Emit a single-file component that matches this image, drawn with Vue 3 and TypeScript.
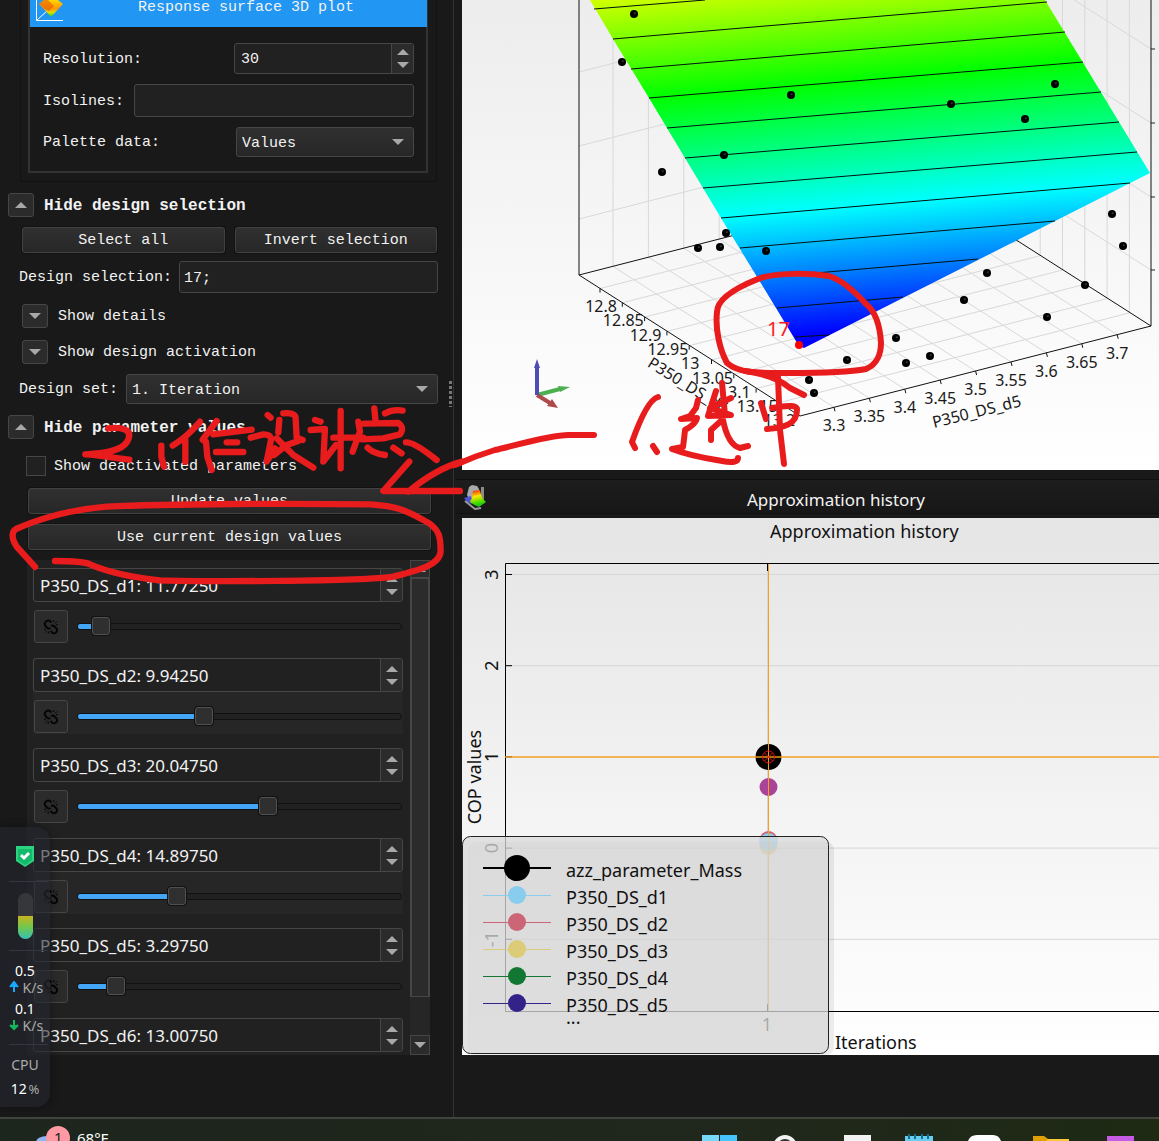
<script setup lang="ts">
import { ref } from 'vue'

interface Param { name: string; value: string; pos: number | null }
interface Label { x: number; y: number; t: string }

const resolution = ref('30')
const isolines = ref('')
const selection = ref('17;')
const showDeactivated = ref(false)

const params = ref<Param[]>([
  { name: 'P350_DS_d1', value: '11.77250', pos: 46 },
  { name: 'P350_DS_d2', value: '9.94250', pos: 382 },
  { name: 'P350_DS_d3', value: '20.04750', pos: 595 },
  { name: 'P350_DS_d4', value: '14.89750', pos: 294 },
  { name: 'P350_DS_d5', value: '3.29750', pos: 94 },
  { name: 'P350_DS_d6', value: '13.00750', pos: null },
])

const range = (n: number) => Array.from({ length: n }, (_, i) => i)

// Box corners of the 3D plot: left, front, right and back on the floor.
const L = [579, 275]
const F = [800, 416]
const R = [1151, 326]
const B = [930, 185]

const d5Ticks = range(9).map(i => ({ x: 834 + i * 35.4, y: 407.3 - i * 9.07 }))
const d6Ticks = range(9).map(i => ({ x: 600 + i * 22.3, y: 288.5 + i * 14.3 }))
const wallLevels = [49, 123, 197, 270]

const d5Labels: Label[] = ['3.3', '3.35', '3.4', '3.45', '3.5', '3.55', '3.6', '3.65', '3.7']
  .map((t, i) => ({ t, x: 834 + i * 35.4, y: 431 - i * 9 }))
const d6Labels: Label[] = ['12.8', '12.85', '12.9', '12.95', '13', '13.05', '13.1', '13.15', '13.2']
  .map((t, i) => ({ t, x: 601 + i * 22.3, y: 312 + i * 14.3 }))

const contours = [
  [594, 9, 705, 0], [613, 39, 1047, 2], [631, 69, 1065, 32], [649, 98, 1083, 62],
  [667, 128, 1101, 92], [685, 158, 1119, 122], [703, 188, 1137, 152], [721, 218, 1130, 183],
  [740, 248, 1055, 221], [758, 278, 978, 259], [777, 308, 903, 297], [795, 337, 829, 335],
]
const designs = [
  [634, 14], [622, 62], [662, 172], [791, 95], [724, 155], [951, 104], [1025, 119], [1055, 84],
  [1112, 214], [726, 233], [698, 248], [720, 247], [766, 251], [1123, 246], [1085, 285], [1047, 317],
  [987, 273], [964, 300], [896, 338], [906, 363], [930, 356], [847, 360], [809, 380], [814, 393],
]

const copTicks = [3, 2, 1, 0, -1].map((v, i) => ({ v, y: 574.5 + i * 91.2 }))
const legend = [
  { t: 'azz_parameter_Mass', c: '#000000', r: 13, y: 868 },
  { t: 'P350_DS_d1', c: '#88ccee', r: 9, y: 895 },
  { t: 'P350_DS_d2', c: '#cc6677', r: 9, y: 922 },
  { t: 'P350_DS_d3', c: '#ddcc77', r: 9, y: 949 },
  { t: 'P350_DS_d4', c: '#117733', r: 9, y: 976 },
  { t: 'P350_DS_d5', c: '#332288', r: 9, y: 1003 },
]
</script>

<template>
  <div class="desktop">
    <main class="window">
      <aside class="settings">
        <div class="frame">
          <section class="group">
            <h2 class="group-title">
              <svg class="plot-icon" width="30" height="22" viewBox="0 0 30 22">
                <defs>
                  <linearGradient id="sheet" x1="0" y1="0" x2="0" y2="1">
                    <stop offset="0" stop-color="#ffd800" /><stop offset=".5" stop-color="#ff9500" />
                    <stop offset=".75" stop-color="#d9e000" /><stop offset="1" stop-color="#00d020" />
                  </linearGradient>
                </defs>
                <path d="M1.500 0V20.500H28M2 20L12 11" fill="none" stroke="#fff" />
                <path d="M4 4L9 0H23L28 4L16 17Q10 10 4 4Z" fill="url(#sheet)" />
                <path d="M4 4Q11 10 14 11L19 6L13 0H9Z" fill="#e85a00" opacity=".6" />
              </svg>
              <span>Response surface 3D plot</span>
            </h2>
            <div class="group-body">
              <div class="row">
                <label for="resolution">Resolution:</label>
                <div class="spin mid">
                  <input id="resolution" v-model="resolution" type="text">
                  <div class="steps"><button aria-label="Increase resolution"><i class="tri up" /></button><button aria-label="Decrease resolution"><i class="tri" /></button></div>
                </div>
              </div>
              <div class="row">
                <label for="isolines">Isolines:</label>
                <input id="isolines" v-model="isolines" class="field" type="text">
              </div>
              <div class="row">
                <label for="palette">Palette data:</label>
                <div class="drop mid"><select id="palette"><option>Values</option></select></div>
              </div>
            </div>
          </section>
        </div>

        <div class="fold">
          <button class="toggle" aria-label="Hide design selection"><i class="tri up" /></button>
          <h3>Hide design selection</h3>
        </div>
        <div class="pair">
          <button class="btn">Select all</button>
          <button class="btn">Invert selection</button>
        </div>
        <div class="line">
          <label for="selection">Design selection:</label>
          <input id="selection" v-model="selection" class="field" type="text">
        </div>
        <div class="fold sub">
          <button class="toggle" aria-label="Show details"><i class="tri" /></button>
          <span>Show details</span>
        </div>
        <div class="fold sub">
          <button class="toggle" aria-label="Show design activation"><i class="tri" /></button>
          <span>Show design activation</span>
        </div>
        <div class="line">
          <label for="set">Design set:</label>
          <div class="drop"><select id="set"><option>1. Iteration</option></select></div>
        </div>
        <div class="fold">
          <button class="toggle" aria-label="Hide parameter values"><i class="tri up" /></button>
          <h3>Hide parameter values</h3>
        </div>
        <div class="check">
          <input id="deactivated" v-model="showDeactivated" type="checkbox">
          <label for="deactivated">Show deactivated parameters</label>
        </div>
        <div class="actions">
          <button class="btn">Update values</button>
          <button class="btn">Use current design values</button>
        </div>

        <div class="params">
          <ul>
            <li v-for="(p, i) in params" :key="p.name" :class="{ alt: i % 2 === 1, short: p.pos === null }">
              <div class="spin tall">
                <input type="text" :value="`${p.name}: ${p.value}`" :aria-label="p.name">
                <div class="steps"><button :aria-label="`Increase ${p.name}`"><i class="tri up" /></button><button :aria-label="`Decrease ${p.name}`"><i class="tri" /></button></div>
              </div>
              <div v-if="p.pos !== null" class="slide">
                <button class="link" :aria-label="`Unlink ${p.name}`">
                  <svg width="16" height="16" viewBox="0 0 16 16" fill="none" stroke="#050505" stroke-width="2">
                    <path d="M8.500 3.500L7 2Q4.500 .5 2.500 3Q1 5 2.500 7L4.500 9Q6 10 7.500 9" />
                    <path d="M8 7Q10 6 11.500 7.500L13.500 9.500Q15 11.500 13 13.500Q11 15 9 13.500L7.500 12" />
                    <path d="M10.500 3L11 1M12 4.500L14 2.500M13 6L15 5.500M5.500 12.500L5 15M4 11.500L2 13.500M3 10L1 10.500" stroke-width="1" />
                  </svg>
                </button>
                <input v-model="p.pos" type="range" min="0" max="1000" :aria-label="`${p.name} value`" :style="{ '--fill': `${p.pos / 10}%` }">
              </div>
            </li>
          </ul>
          <div class="bar">
            <div class="bar-end first"><i class="tri up" /></div>
            <div class="bar-thumb" />
            <div class="bar-end"><i class="tri" /></div>
          </div>
        </div>
        <div class="grip" />
      </aside>

      <section class="plots">
        <svg class="plot" viewBox="462 0 697 470" role="img" aria-label="Response surface">
          <defs>
            <linearGradient id="bg" x1="0" y1="0" x2="0" y2="1">
              <stop offset="0" stop-color="#ededed" /><stop offset="1" stop-color="#ffffff" />
            </linearGradient>
            <linearGradient id="palette3d" gradientUnits="userSpaceOnUse" x1="0" y1="28" x2="32" y2="402">
              <stop offset="0" stop-color="#ffff00" /><stop offset=".333" stop-color="#00ff00" />
              <stop offset=".666" stop-color="#00ffff" /><stop offset="1" stop-color="#0000ff" />
            </linearGradient>
            <radialGradient id="ball" cx=".6" cy=".4" r=".5">
              <stop offset="0" stop-color="#444" /><stop offset=".4" stop-color="#000" />
            </radialGradient>
          </defs>
          <rect x="462" y="0" width="697" height="470" fill="url(#bg)" />
          <g stroke="#d8d8d8" stroke-width="1">
            <template v-for="(t, i) in d5Ticks" :key="'a' + i">
              <line :x1="t.x" :y1="t.y" :x2="t.x - 221" :y2="t.y - 141" />
              <line :x1="t.x - 221" :y1="t.y - 141" :x2="t.x - 221" y2="0" />
            </template>
            <template v-for="(t, i) in d6Ticks" :key="'b' + i">
              <line :x1="t.x" :y1="t.y" :x2="t.x + 351" :y2="t.y - 90" />
              <line :x1="t.x + 351" :y1="t.y - 90" :x2="t.x + 351" y2="0" />
            </template>
            <template v-for="y in wallLevels" :key="'w' + y">
              <line :x1="R[0]" :y1="y" :x2="B[0]" :y2="y - 141" />
              <line :x1="L[0]" :y1="y - 51" :x2="B[0]" :y2="y - 141" />
              <line :x1="R[0]" :y1="y" :x2="R[0] + 4" :y2="y" stroke="#222" />
            </template>
          </g>
          <g stroke="#111" stroke-width="1" fill="none">
            <path :d="`M${L[0]} 0V${L[1]}L${F[0]} ${F[1]}L${R[0]} ${R[1]}V0M${L[0]} ${L[1]}L${B[0]} ${B[1]}L${R[0]} ${R[1]}`" />
            <line v-for="(t, i) in d5Ticks" :key="i" :x1="t.x" :y1="t.y" :x2="t.x + 1" :y2="t.y + 4" />
            <line v-for="(t, i) in d6Ticks" :key="i" :x1="t.x" :y1="t.y" :x2="t.x" :y2="t.y + 4" />
          </g>
          <path d="M590 0H1045L1150 173L804 348L799 346L776 308L721 218L685 158L649 98L613 39Z" fill="url(#palette3d)" />
          <g stroke="#001010" stroke-width="1">
            <line v-for="(c, i) in contours" :key="i" :x1="c[0]" :y1="c[1]" :x2="c[2]" :y2="c[3]" />
          </g>
          <circle v-for="(d, i) in designs" :key="i" :cx="d[0]" :cy="d[1]" r="4" fill="url(#ball)" />
          <circle cx="799" cy="345" r="4" fill="#f00" />
          <text class="picked" x="767" y="336">17</text>
          <g class="tick">
            <text v-for="l in d5Labels" :key="l.t" :x="l.x" :y="l.y">{{ l.t }}</text>
            <text v-for="l in d6Labels" :key="l.t" :x="l.x" :y="l.y">{{ l.t }}</text>
            <text transform="translate(978 417) rotate(-14)">P350_DS_d5</text>
            <text transform="translate(685 390) rotate(32)">P350_DS_d6</text>
          </g>
          <g stroke-width="4">
            <path d="M537 395L560 389" stroke="#4caf50" /><path d="M558 386L570 387L560 392Z" fill="#4caf50" />
            <path d="M537 395L550 403" stroke="#b04a4a" /><path d="M552 399L558 408L547 406Z" fill="#b04a4a" />
            <path d="M537 395V366" stroke="#4d4db3" /><path d="M534 368L537 359L540 368Z" fill="#4d4db3" />
          </g>
        </svg>

        <header class="plot-head">
          <svg width="24" height="26" viewBox="0 0 24 26">
            <defs>
              <linearGradient id="heat" x1=".4" y1="0" x2=".6" y2="1">
                <stop offset="0" stop-color="#ff2a00" /><stop offset=".35" stop-color="#ffe600" />
                <stop offset=".75" stop-color="#3cdc00" /><stop offset="1" stop-color="#12b030" />
              </linearGradient>
            </defs>
            <path d="M4 11L6 3L9 1L14 2L16 5V9L12 15L5 13Z" fill="#a9a9a9" />
            <path d="M18 3H21V16L18 12Z" fill="#8c8c8c" />
            <path d="M1 14L8 12L9 20L4 18Z" fill="#4a55d8" />
            <path d="M2 17L12 25L18 24" fill="none" stroke="#999" stroke-width="2" />
            <path d="M10 7L17 6Q18 14 23 18L16 23Q12 22 7 18Q10 13 10 7Z" fill="url(#heat)" />
          </svg>
          <h2>Approximation history</h2>
        </header>

        <svg class="plot" viewBox="462 518 697 537" role="img" aria-label="Approximation history">
          <defs>
            <linearGradient id="bg2" x1="0" y1="0" x2="0" y2="1">
              <stop offset="0" stop-color="#e5e5e5" /><stop offset="1" stop-color="#ffffff" />
            </linearGradient>
          </defs>
          <rect x="462" y="518" width="697" height="537" fill="url(#bg2)" />
          <text class="chart" x="770" y="538">Approximation history</text>
          <line v-for="t in copTicks" :key="t.v" x1="506" :y1="t.y" x2="1159" :y2="t.y" stroke="#d6d6d6" />
          <line x1="767.500" y1="564" x2="767.500" y2="1011" stroke="#d6d6d6" />
          <path d="M1160 563.500H505.500V1011.500H1160M767.500 564V571M767.500 1011V1004" fill="none" stroke="#000" />
          <g v-for="t in copTicks" :key="t.v">
            <line x1="506" :y1="t.y" x2="512" :y2="t.y" stroke="#000" />
            <text class="chart mid-text" :transform="`translate(498 ${t.y}) rotate(-90)`">{{ t.v }}</text>
          </g>
          <text class="chart mid-text" transform="translate(481 777) rotate(-90)">COP values</text>
          <text class="chart mid-text" x="767" y="1031">1</text>
          <text class="chart" x="835" y="1049">Iterations</text>
          <circle cx="768.500" cy="757" r="13" fill="#000" />
          <circle cx="768.500" cy="787" r="9" fill="#aa4499" />
          <circle cx="768.500" cy="846" r="9" fill="#ddcc77" />
          <circle cx="768.500" cy="840" r="9" fill="#cc6677" />
          <circle cx="768.500" cy="842" r="9" fill="#88ccee" />
          <path d="M505 757H1160" stroke="#f9a01b" stroke-width="2" opacity=".7" />
          <path d="M768.500 564V1011" stroke="#f9a01b" stroke-width="1" />
          <path d="M764.500 753L772.500 761M772.500 753L764.500 761" stroke="#e01010" />
          <circle cx="768.500" cy="757" r="6" fill="none" stroke="#e01010" />
          <rect x="468" y="842" width="366" height="213" rx="8" fill="#000" opacity=".07" />
          <rect x="462.500" y="836.500" width="366" height="217" rx="8" fill="#d9d9d9" fill-opacity=".76" stroke="#222" />
          <g v-for="l in legend" :key="l.t">
            <line class="key" x1="483" :y1="l.y" x2="551" :y2="l.y" :stroke="l.c" :stroke-width="l.r > 9 ? 2 : 1" />
            <circle cx="517" :cy="l.y" :r="l.r" :fill="l.c" />
            <text class="chart" x="566" :y="l.y + 9">{{ l.t }}</text>
          </g>
          <text class="chart" x="566" y="1024">...</text>
        </svg>
      </section>
    </main>

    <aside class="monitor">
      <svg class="shield" width="18" height="21" viewBox="0 0 18 21">
        <path d="M0 0H18V15L9 21L0 15Z" fill="#2bd47f" /><path d="M2 3H16V14L9 19L2 14Z" fill="#14ba6c" />
        <path d="M5 9L8 12L13 7" fill="none" stroke="#fff" stroke-width="3" />
      </svg>
      <hr>
      <div class="tube" />
      <hr>
      <b>0.5</b>
      <p><svg width="10" height="12" viewBox="0 0 10 12"><path d="M5 11V3M1 6L5 1L9 6" fill="#1aa7ff" stroke="#1aa7ff" stroke-width="2" /></svg> K/s</p>
      <b>0.1</b>
      <p><svg width="10" height="12" viewBox="0 0 10 12"><path d="M5 1V9M1 6L5 10L9 6" fill="#12b85e" stroke="#12b85e" stroke-width="2" /></svg> K/s</p>
      <hr>
      <span class="cpu">CPU</span>
      <div class="load">12 <small>%</small></div>
    </aside>

    <footer class="taskbar">
      <div class="weather">
        <svg width="40" height="22" viewBox="0 0 40 22">
          <ellipse cx="17" cy="23" rx="11" ry="6" fill="#8fb4f5" />
          <circle cx="28" cy="19" r="12" fill="#ff99a4" />
        </svg>
        <span class="badge">1</span>
        <span>68°F</span>
      </div>
      <svg class="apps" width="458" height="22" viewBox="701 1119 458 22">
        <path d="M702 1135H719V1141H702Z" fill="#76d8fb" /><path d="M720 1135H737V1141H720Z" fill="#45c5fb" />
        <circle cx="785" cy="1147" r="10" fill="#333" stroke="#f2f2f2" stroke-width="4" />
        <path d="M844 1135H871V1141H844Z" fill="#f2f2f2" />
        <path d="M905 1136H933V1141H905Z" fill="#68cdee" />
        <path d="M909 1134V1139M915 1134V1139M922 1134V1139M928 1134V1139" stroke="#12708f" stroke-width="2" />
        <path d="M968 1141Q970 1135 977 1135H993Q999 1135 1001 1141Z" fill="#fff" />
        <path d="M1033 1136H1044L1048 1139H1069V1141H1033Z" fill="#e0a000" /><path d="M1048 1139H1069V1141H1046Z" fill="#ffc83a" />
        <path d="M1107 1136H1134V1141H1107Z" fill="#c45ce6" />
      </svg>
    </footer>

    <svg class="ink" width="1159" height="1141" viewBox="0 0 1159 1141">
      <g transform="translate(0 395) scale(.3333)" stroke-width="19">
        <path d="M325 100C360 96 396 102 386 130C378 160 330 176 256 178C300 180 350 190 388 194" />
        <path d="M484 152V185L492 215M600 80C575 110 545 135 518 152M556 135V200" />
        <path d="M650 78L608 134L618 140L622 185L635 225M640 118L755 104M680 142H712M648 171H730" />
        <path d="M803 60L812 68M838 75L835 112M850 55Q888 52 887 70L890 128L908 135M752 128L790 118Q818 118 812 140L800 200L825 160M895 138L860 150L822 180M830 130L880 180L940 218" />
        <path d="M945 75L962 80M932 105L975 102L970 200L1008 150M1022 48V220M1000 128H1090" />
        <path d="M1123 40L1127 82M1155 55Q1180 42 1208 47M1075 80L1080 110L1058 170M1092 86L1195 84Q1215 98 1200 118L1150 130L1085 133M1103 158Q1120 175 1155 180M1180 158L1205 175M1218 142Q1242 140 1310 195" />
        <path d="M1228 200L1150 288H1380M1225 290C1280 245 1330 215 1386 200" />
        <path d="M105 516L50 455C34 430 34 410 48 402C120 370 200 345 320 335C500 326 900 325 1110 328C1190 332 1225 350 1270 375C1322 400 1322 430 1322 470C1318 510 1260 525 1180 545C1080 560 600 560 480 556C380 545 320 530 270 508Q250 498 165 498" />
      </g>
      <g stroke-width="6">
        <path d="M455 465Q475 456 495 450C520 444 555 434 570 435H594" />
        <path d="M829 276C800 272 770 274 758 279C738 287 717 298 717 312C715 330 720 350 727 363C740 374 760 373 789 373C820 373 850 372 866 369C878 364 881 352 881 343C880 325 876 312 866 304C855 292 842 280 829 276" />
        <path d="M745 371Q775 375 790 388L804 395" />
        <path d="M658 397C648 400 638 425 632 442L635 448M653 446L657 452" />
        <path d="M698 400L696 408L690 416L681 419L697 418Q696 424 685 430Q684 440 683 447L672 449C690 456 710 459 722 461Q738 464 738 458" />
        <path d="M722 383L725 415M716 391L708 416L731 415L710 408L731 398M722 420L711 430V440M723 420Q728 445 740 448L748 446" />
        <path d="M761 403L766 419M772 408Q798 403 797 410C797 424 784 428 767 429M778 377L780 430L784 464" />
      </g>
    </svg>
  </div>
</template>

<style>
body { background: #191919; }
</style>

<style scoped>
* { box-sizing: border-box; }
.desktop {
  position: relative;
  display: flex;
  flex-direction: column;
  min-height: 100vh;
  overflow: hidden;
  background: #191919;
  color: #f2f2f2;
  font: 15px/16px "Liberation Mono", "Noto Sans CJK SC", monospace;
}
h2, h3, p, ul { margin: 0; padding: 0; font-size: inherit; list-style: none; }
button, input, select { font: inherit; color: inherit; margin: 0; }
button { padding: 0; }
label, .fold span, .fold h3 { padding-top: 2px; }
.window { display: flex; flex: 1; }
.settings { position: relative; flex: 0 0 454px; border-right: 1px solid #333; }

.frame { margin: 0 16px 0 20px; padding: 0 8px 8px 7px; border: 1px solid #121212; border-top: 0; }
.group { border: 2px solid #333; border-top: 0; }
.group-title {
  display: flex;
  height: 27px;
  margin-right: -1px;
  padding-left: 5px;
  background: #2196f3;
  font-weight: normal;
  line-height: 16px;
}
.group-title span { flex: 1; text-align: center; }
.group-body { display: flex; flex-direction: column; gap: 10px; padding: 16px 12px 14px 13px; }
.row { display: flex; align-items: center; justify-content: space-between; }
.mid { width: 180px; }
.field {
  flex: 1;
  min-width: 0;
  height: 32px;
  padding: 2px 4px 0;
  border: 1px solid #464646;
  border-radius: 3px;
  background: #212121;
}
.row .field { height: 33px; margin-left: 10px; }
.spin { display: flex; height: 31px; border: 1px solid #464646; border-radius: 3px; background: #212121; }
.spin input { flex: 1; min-width: 0; padding: 2px 6px 0; border: 0; background: none; }
.steps { display: flex; flex-direction: column; width: 22px; padding: 2px 0; border-left: 1px solid #464646; background: #2b2b2b; border-radius: 0 3px 3px 0; }
.steps button { display: flex; flex: 1; align-items: center; justify-content: center; border: 0; background: none; }
.tri { border: 6px solid transparent; border-top-color: #a8a8a8; border-bottom: 0; }
.tri.up { border-top: 0; border-bottom: 6px solid #a8a8a8; }
.drop { position: relative; flex: 1; height: 30px; }
.drop.mid { flex: 0 0 178px; }
.drop select {
  appearance: none;
  width: 100%;
  height: 100%;
  padding: 3px 5px 0;
  border: 1px solid #464646;
  border-radius: 3px;
  background: linear-gradient(#303030, #272727);
}
.drop::after {
  content: "";
  position: absolute;
  top: 12px;
  right: 10px;
  border: 6px solid transparent;
  border-top-color: #a8a8a8;
  border-bottom: 0;
}

.fold { display: flex; align-items: center; gap: 10px; height: 24px; margin: 11px 0 10px 8px; }
.fold h3 { font-size: 16px; }
.fold.sub { margin-left: 22px; margin-bottom: 12px; }
.fold.sub + .line { margin-top: -2px; }
.toggle {
  display: flex;
  align-items: center;
  justify-content: center;
  width: 26px;
  height: 24px;
  border: 1px solid #464646;
  border-radius: 3px;
  background: #2b2b2b;
}
.btn {
  height: 26px;
  padding-top: 2px;
  border: 1px solid #424242;
  border-radius: 3px;
  background: linear-gradient(#303030, #272727);
  box-shadow: 0 0 0 1px #121212;
}
.pair { display: grid; grid-template-columns: 1fr 1fr; gap: 10px; margin: 0 16px 8px 22px; }
.line { display: flex; align-items: center; gap: 7px; margin: 0 15px 11px 19px; }
.line .drop { margin-left: 1px; }
.check { display: flex; align-items: center; gap: 8px; margin: 17px 0 12px 26px; }
.check input { appearance: none; width: 20px; height: 20px; border: 1px solid #464646; background: #212121; }
.actions { display: flex; flex-direction: column; gap: 10px; margin: 0 22px 10px 28px; }

.params {
  display: flex;
  gap: 7px;
  margin: 0 23px 0 27px;
  background: #212121;
  font-family: "Noto Sans", sans-serif;
  font-size: 17px;
}
.params ul { flex: 1; padding: 8px 0 4px 6px; }
.params li { height: 76px; margin-bottom: 14px; }
.params li.alt { background: #262626; }
.params li.short { height: 33px; margin-bottom: 0; }
.spin.tall { height: 34px; }
.spin.tall input { padding-top: 0; }
.tall .steps { padding: 3px 0; }
.slide { display: flex; align-items: center; gap: 9px; padding: 8px 1px 0; }
.link {
  display: flex;
  align-items: center;
  justify-content: center;
  width: 34px;
  height: 33px;
  border: 1px solid #464646;
  border-radius: 3px;
  background: #2b2b2b;
}
.slide input {
  appearance: none;
  flex: 1;
  min-width: 0;
  height: 20px;
  background: none;
}
.slide input::-webkit-slider-runnable-track {
  height: 7px;
  border: 1px solid #111;
  border-radius: 3px;
  background: linear-gradient(90deg, #42a5f5 var(--fill), #212121 var(--fill));
}
.slide input::-webkit-slider-thumb {
  appearance: none;
  width: 18px;
  height: 18px;
  margin-top: -7px;
  border: 1px solid #505050;
  border-radius: 3px;
  background: #2f2f2f;
  box-shadow: 0 0 0 1px #121212;
}
.bar { display: flex; flex-direction: column; width: 20px; background: #262626; }
.bar-end { display: flex; align-items: center; justify-content: center; height: 20px; border: 1px solid #464646; background: #2b2b2b; }
.bar-end.first { height: 18px; }
.bar-thumb { flex: 1; margin-bottom: 38px; border: 1px solid #464646; border-width: 1px 2px; background: #2b2b2b; }
.grip {
  position: absolute;
  top: 381px;
  right: 1px;
  width: 3px;
  height: 26px;
  background: repeating-linear-gradient(#777 0 3px, transparent 3px 5px);
}

.plots { flex: 1; min-width: 0; padding-left: 8px; }
.plot { display: block; width: 100%; height: auto; font-family: "Noto Sans", sans-serif; }
.plot-head {
  display: flex;
  align-items: center;
  height: 35px;
  margin: 9px 0 4px -7px;
  padding-left: 8px;
  border: 1px solid #101010;
  border-width: 1px 0;
  background: linear-gradient(#1d1d1d, #171717);
  font: 17px/24px "Noto Sans", sans-serif;
}
.plot-head h2 { flex: 1; padding: 7px 0 0 26px; text-align: center; font-weight: normal; }
.tick { font-size: 16px; fill: #1a1a1a; text-anchor: middle; }
.chart { font-size: 18px; fill: #111; }
.mid-text { text-anchor: middle; }
.picked { font-size: 20px; fill: #ff1a1a; }
.key { shape-rendering: crispEdges; }

.monitor {
  position: absolute;
  top: 827px;
  left: 0;
  display: flex;
  flex-direction: column;
  align-items: center;
  width: 50px;
  height: 280px;
  padding-top: 19px;
  border-radius: 0 14px 14px 0;
  background: rgba(36, 39, 46, .6);
  box-shadow: 0 0 8px rgba(0, 0, 0, .4);
  color: #aaa;
  font: 14px/17px "Noto Sans", sans-serif;
}
.monitor hr { width: 39px; margin: 14px 0 11px 6px; border: 0; border-top: 1px solid #34383e; }
.monitor b { color: #fff; font-weight: normal; }
.monitor p { margin: 0 0 4px 2px; }
.monitor .tube { width: 15px; height: 46px; border-radius: 8px; background: linear-gradient(#35373b 50%, #c9b41c 50%, #6cc850 75%, #36c0b8); }
.monitor .tube + hr { margin-top: 11px; }
.monitor p + hr { margin-top: 6px; }
.load { margin-top: 7px; color: #fff; }
.load small { margin-left: -2px; color: #aaa; font-size: 13px; }

.taskbar {
  display: flex;
  justify-content: space-between;
  height: 24px;
  overflow: hidden;
  border-top: 2px solid #40443c;
  background: linear-gradient(90deg, #1d261d, #20271c 60%, #1e2a14);
  color: #fff;
  font: 15px/20px "Noto Sans", sans-serif;
}
.weather { position: relative; display: flex; gap: 7px; padding-left: 30px; }
.weather > span:last-child { padding-top: 9px; }
.weather .badge { position: absolute; top: 8px; left: 54px; color: #222; }

.ink { position: absolute; top: 0; left: 0; pointer-events: none; fill: none; stroke: #e81c1c; stroke-linecap: round; stroke-linejoin: round; }
</style>
